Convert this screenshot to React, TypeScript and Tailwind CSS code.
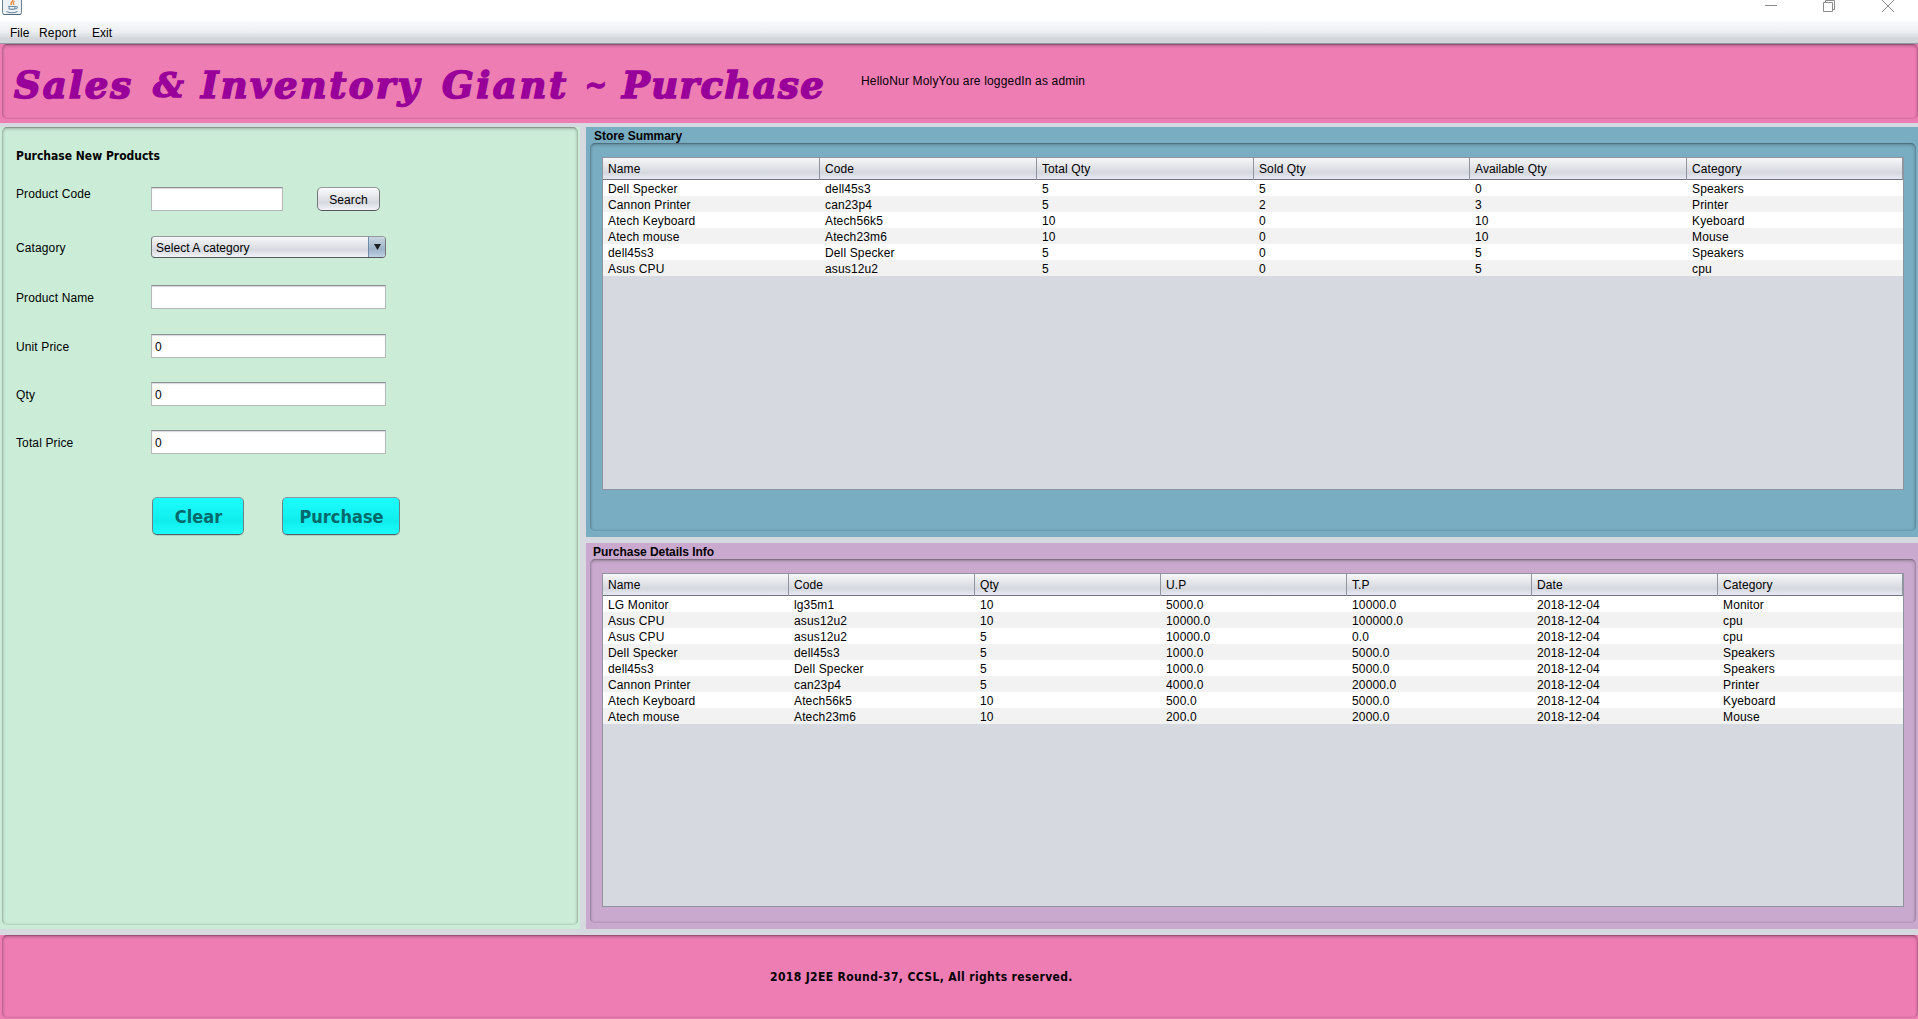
import type { ReactNode } from "react";

const storeColumns = ["Name", "Code", "Total Qty", "Sold Qty", "Available Qty", "Category"];

const storeRows = [
  ["Dell Specker", "dell45s3", "5", "5", "0", "Speakers"],
  ["Cannon Printer", "can23p4", "5", "2", "3", "Printer"],
  ["Atech Keyboard", "Atech56k5", "10", "0", "10", "Kyeboard"],
  ["Atech mouse", "Atech23m6", "10", "0", "10", "Mouse"],
  ["dell45s3", "Dell Specker", "5", "0", "5", "Speakers"],
  ["Asus CPU", "asus12u2", "5", "0", "5", "cpu"],
];

const purchaseColumns = ["Name", "Code", "Qty", "U.P", "T.P", "Date", "Category"];

const purchaseRows = [
  ["LG Monitor", "lg35m1", "10", "5000.0", "10000.0", "2018-12-04", "Monitor"],
  ["Asus CPU", "asus12u2", "10", "10000.0", "100000.0", "2018-12-04", "cpu"],
  ["Asus CPU", "asus12u2", "5", "10000.0", "0.0", "2018-12-04", "cpu"],
  ["Dell Specker", "dell45s3", "5", "1000.0", "5000.0", "2018-12-04", "Speakers"],
  ["dell45s3", "Dell Specker", "5", "1000.0", "5000.0", "2018-12-04", "Speakers"],
  ["Cannon Printer", "can23p4", "5", "4000.0", "20000.0", "2018-12-04", "Printer"],
  ["Atech Keyboard", "Atech56k5", "10", "500.0", "5000.0", "2018-12-04", "Kyeboard"],
  ["Atech mouse", "Atech23m6", "10", "200.0", "2000.0", "2018-12-04", "Mouse"],
];

const bevel =
  "rounded-[5px] border border-t-black/35 border-x-black/20 border-b-black/10 shadow-[inset_0_1px_3px_rgba(0,0,0,0.25)]";

const tahoma = "font-['DejaVu_Sans_Condensed','DejaVu_Sans',sans-serif] font-bold [font-stretch:condensed]";

function JavaIcon() {
  return (
    <svg className="ml-[2px] h-[15px] w-[20px]" viewBox="0 0 20 15" fill="none">
      <rect x="0.5" y="-5" width="19" height="19.5" rx="2" fill="#eef1f4" stroke="#6b8192" />
      <path d="M1.500 14.5h17" stroke="#4c6a80" />
      <path d="M10.5 -1c2 2-3 3-1 6M12.5 1c-2 1.5-1.500 2-.5 4" stroke="#e8893a" strokeWidth="1.3" />
      <path d="M6 6.500h8M6.500 8.500c2 1 5 1 7 0M7 6.500c0 3 1 3 3 3s3 0 3-3M14 6.500c2 0 1.500 2-.5 2.300M4.500 11.500c3 1.500 8 1.500 11 0" stroke="#6f8ea6" strokeWidth="1.100" />
    </svg>
  );
}

function TitleBar() {
  return (
    <div className="flex h-[21px] items-start justify-between bg-white">
      <JavaIcon />
      <svg className="mr-[24px] h-[12px] w-[129px]" viewBox="0 0 129 12" fill="none" stroke="#8b8b8b">
        <path d="M0 5.500h12" />
        <path d="M58.500 2.500h9v9h-9zM60.500 2.500v-2h9v9h-2" />
        <path d="M117 0l12 12M129 0l-12 12" />
      </svg>
    </div>
  );
}

function MenuBar() {
  return (
    <div className="flex h-[23px] border-b border-[#8f9aa3] bg-linear-to-b from-[#f9fafb] via-[#eceef1] to-[#d2d6da] to-80% pl-[10px] leading-[25px]">
      <span className="w-[29px]">File</span>
      <span className="w-[53px] tracking-[0.2px]">Report</span>
      <span>Exit</span>
    </div>
  );
}

function FormRow({ label, top, offset, children }: { label: string; top: string; offset: string; children: ReactNode }) {
  return (
    <div className={`flex items-start ${top}`}>
      <span className={`w-[135px] shrink-0 leading-[16px] tracking-[0.12px] ${offset}`}>{label}</span>
      {children}
    </div>
  );
}

function Field({ value = "", width = "w-[235px]" }: { value?: string; width?: string }) {
  return (
    <div
      className={`h-[24px] border border-t-[#8e8f92] border-x-[#b6b8bb] border-b-[#b6b8bb] bg-white pl-[3px] leading-[24px] shadow-[inset_0_1px_1px_#d8d8dc] ${width}`}
    >
      {value}
    </div>
  );
}

function ActionButton({ label, width }: { label: string; width: string }) {
  return (
    <button
      className={`${tahoma} h-[38px] rounded-[5px] border border-t-[#859aa0] border-x-[#6c8288] border-b-[#4f5f65] bg-linear-to-b from-[#1cffff] via-[#10ecec] via-65% to-[#1cffff] pl-[1px] text-[18px] leading-[35px] text-[#00696b] shadow-[0_1px_0_rgba(0,0,0,0.12)] ${width}`}
    >
      {label}
    </button>
  );
}

function PurchaseForm() {
  return (
    <section className="h-[802px] w-[580px] bg-[#cbedd8] pl-[2px] pr-[2px] pb-[4px]">
      <div className={`h-[798px] pl-[13px] ${bevel}`}>
        <h2 className={`pt-[20px] text-[12px] leading-[16px] ${tahoma}`}>Purchase New Products</h2>
        <FormRow label="Product Code" top="mt-[23px]" offset="mt-[-1px]">
          <Field width="w-[132px]" />
          <button className="ml-[34px] h-[24px] w-[63px] rounded-[5px] border border-t-[#95989d] border-x-[#74777c] border-b-[#54575c] bg-linear-to-b from-[#fbfbfc] via-[#d6d9df] via-65% to-[#f2f4f8] leading-[24px] tracking-[0.1px]">
            Search
          </button>
        </FormRow>
        <FormRow label="Catagory" top="mt-[25px]" offset="mt-[4px]">
          <div className="flex h-[22px] w-[235px] overflow-hidden rounded-[4px] border border-t-[#95989d] border-x-[#74777c] border-b-[#54575c] bg-linear-to-b from-[#f8f8fa] via-[#d6d9df] via-65% to-[#f2f4f8]">
            <span className="flex-1 pl-[4px] leading-[22px] tracking-[0.05px]">Select A category</span>
            <span className="flex w-[17px] items-center justify-center border-l border-[#6c8ca5] bg-linear-to-b from-[#c9d6e2] via-[#9db2c7] via-60% to-[#bfd2e6]">
              <svg className="mb-[1px] h-[6px] w-[7px]" viewBox="0 0 7 6">
                <path d="M0 0h7L3.500 6z" fill="#1c1f22" />
              </svg>
            </span>
          </div>
        </FormRow>
        <FormRow label="Product Name" top="mt-[27px]" offset="mt-[5px]">
          <Field />
        </FormRow>
        <FormRow label="Unit Price" top="mt-[25px]" offset="mt-[5px]">
          <Field value="0" />
        </FormRow>
        <FormRow label="Qty" top="mt-[24px]" offset="mt-[5px]">
          <Field value="0" />
        </FormRow>
        <FormRow label="Total Price" top="mt-[24px]" offset="mt-[5px]">
          <Field value="0" />
        </FormRow>
        <div className="mt-[43px] ml-[136px] flex gap-[38px]">
          <ActionButton label="Clear" width="w-[92px]" />
          <ActionButton label="Purchase" width="w-[118px]" />
        </div>
      </div>
    </section>
  );
}

function DataTable({ columns, rows, grid, height }: { columns: string[]; rows: string[][]; grid: string; height: string }) {
  return (
    <div className={`w-[1302px] border border-[#8f949e] bg-[#d6d9df] ${height}`}>
      <div className={`grid h-[22px] border-b border-[#70747c] bg-linear-to-b from-[#f7f7f9] via-[#d5d8de] via-70% to-[#e6e9f2] ${grid}`}>
        {columns.map((c) => (
          <span key={c} className="border-r border-[#8f949e] pl-[5px] leading-[22px] tracking-[0.1px]">
            {c}
          </span>
        ))}
      </div>
      {rows.map((row, i) => (
        <div key={i} className={`grid h-[16px] odd:bg-[#f2f2f2] even:bg-white ${grid}`}>
          {row.map((cell, j) => (
            <span key={j} className="pt-px pl-[5px] leading-[16px] tracking-[0.14px]">
              {cell}
            </span>
          ))}
        </div>
      ))}
    </div>
  );
}

function Banner() {
  return (
    <header className="h-[79px] bg-[#ee7db4] pl-[2px]">
      <div className={`flex h-[75px] pl-[11px] ${bevel}`}>
        <h1 className="flex h-[75px] w-[847px] font-['DejaVu_Serif',serif] text-[37px] leading-[80px] font-bold whitespace-nowrap text-[#990099] italic [-webkit-text-stroke:1.6px_#990099]">
          <span className="w-[139px] tracking-[2px]">Sales</span>
          <span className="w-[48px] text-[34px]">&amp;</span>
          <span className="w-[241px] tracking-[2.400px]">Inventory</span>
          <span className="w-[143px] tracking-[2.600px]">Giant</span>
          <span className="w-[37px] text-[26px]">~</span>
          <span className="tracking-[1.400px]">Purchase</span>
        </h1>
        <p className="pt-[28px] leading-[16px] tracking-[0.17px]">HelloNur MolyYou are loggedIn as admin</p>
      </div>
    </header>
  );
}

export default function App() {
  return (
    <div className="flex h-[1019px] w-[1918px] flex-col overflow-hidden bg-[#d6d9df] font-['Liberation_Sans',Arial,sans-serif] text-[12px] text-black">
      <TitleBar />
      <MenuBar />
      <Banner />
      <main className="mt-[4px] flex h-[802px] gap-[6px]">
        <PurchaseForm />
        <div className="flex w-[1332px] flex-col gap-[6px]">
          <section className="h-[410px] bg-[#78adc2] pr-[2px] pl-[4px]">
            <h2 className="h-[16px] pl-[4px] leading-[18px] font-bold tracking-[-0.05px]">Store Summary</h2>
            <div className={`h-[388px] pt-[13px] pl-[11px] ${bevel}`}>
              <DataTable
                columns={storeColumns}
                rows={storeRows}
                grid="grid-cols-[217px_217px_217px_216px_217px_216px]"
                height="h-[333px]"
              />
            </div>
          </section>
          <section className="h-[386px] bg-[#caa9cf] pr-[2px] pl-[4px]">
            <h2 className="h-[16px] pl-[3px] leading-[18px] font-bold tracking-[-0.05px]">Purchase Details Info</h2>
            <div className={`h-[364px] pt-[13px] pl-[11px] ${bevel}`}>
              <DataTable
                columns={purchaseColumns}
                rows={purchaseRows}
                grid="grid-cols-[186px_186px_186px_186px_185px_186px_185px]"
                height="h-[334px]"
              />
            </div>
          </section>
        </div>
      </main>
      <footer className="mt-[6px] h-[84px] bg-[#ee7db4] pl-[2px]">
        <div className={`h-[83px] pl-[767px] text-[12px] leading-[82px] tracking-[0.37px] ${bevel} ${tahoma}`}>
          2018 J2EE Round-37, CCSL, All rights reserved.
        </div>
      </footer>
    </div>
  );
}
